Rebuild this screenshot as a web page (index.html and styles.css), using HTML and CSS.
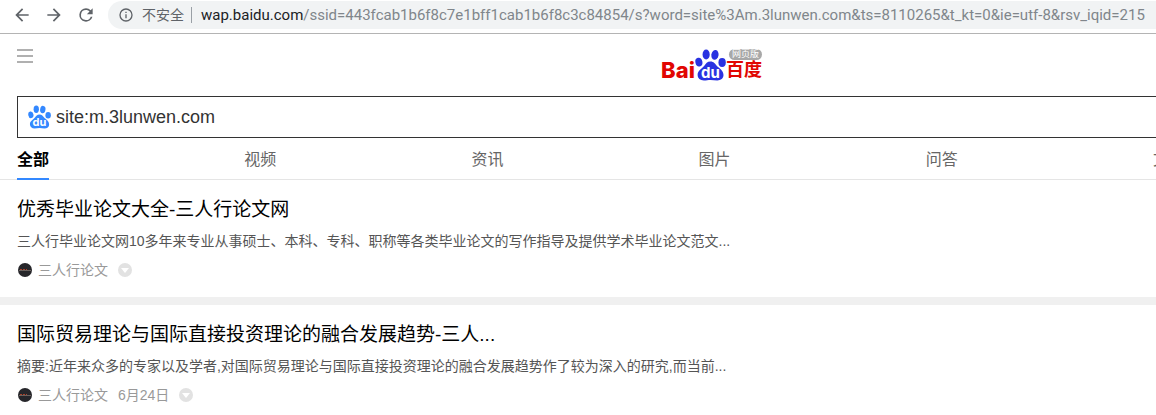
FILE: index.html
```html
<!DOCTYPE html>
<html lang="zh-CN">
<head>
    <meta charset="UTF-8">
    <meta name="viewport" content="width=device-width, initial-scale=1.0">
    <title>site:m.3lunwen.com - 百度</title>
    <link rel="stylesheet" href="styles.css">
</head>
<body>
    <!-- shared icons -->
    <svg class="sprite" aria-hidden="true">
        <symbol id="paw" viewBox="0 0 32 32">
            <ellipse cx="4" cy="13" rx="3.6" ry="4.6" transform="rotate(-12 4 13)"/>
            <ellipse cx="11.5" cy="5.2" rx="3.7" ry="5.1"/>
            <ellipse cx="20.6" cy="5.6" rx="3.7" ry="5.1" transform="rotate(10 20.6 5.6)"/>
            <ellipse cx="28" cy="13.5" rx="3.8" ry="4.6"/>
            <path d="M16 12.4c3.400 0 4.800 2.400 6.400 4.300 2.400 2.500 7 4.800 7 9.600 0 3.500-2.700 5.600-6.400 5.600-2.500 0-4.600-.5-7-.5s-4.300.5-6.800.5c-3.900 0-6.500-2.100-6.500-5.800 0-4.500 4.600-6.600 6.900-9.400 1.600-2.100 3-4.300 6.400-4.300z"/>
        </symbol>
    </svg>

    <header class="browser-bar">
        <button class="nav-btn" aria-label="后退">
            <svg viewBox="0 0 24 24"><path d="M20 11H7.830l5.590-5.590L12 4l-8 8 8 8 1.410-1.410L7.830 13H20v-2z"/></svg>
        </button>
        <button class="nav-btn" aria-label="前进">
            <svg viewBox="0 0 24 24"><path d="M12 4l-1.410 1.410L16.170 11H4v2h12.170l-5.580 5.590L12 20l8-8z"/></svg>
        </button>
        <button class="nav-btn" aria-label="刷新">
            <svg viewBox="0 0 24 24"><path d="M17.650 6.350A7.960 7.960 0 0 0 12 4a8 8 0 1 0 7.730 10h-2.080A6 6 0 1 1 12 6c1.660 0 3.140.69 4.220 1.780L13 11h7V4l-2.350 2.350z"/></svg>
        </button>
        <div class="address">
            <svg class="info" viewBox="0 0 24 24"><path d="M11 7h2v2h-2zm0 4h2v6h-2zm1-9a10 10 0 1 0 0 20 10 10 0 0 0 0-20zm0 18a8 8 0 1 1 0-16 8 8 0 0 1 0 16z"/></svg>
            <span class="security">不安全</span>
            <div class="url"><span class="host">wap.baidu.com</span>/ssid=443fcab1b6f8c7e1bff1cab1b6f8c3c84854/s?word=site%3Am.3lunwen.com&amp;ts=8110265&amp;t_kt=0&amp;ie=utf-8&amp;rsv_iqid=215</div>
        </div>
    </header>

    <div class="top">
        <button class="menu" aria-label="菜单"><span></span><span></span><span></span></button>
        <a class="logo" href="#" aria-label="百度">
            <span class="logo-bai">Bai</span>
            <span class="logo-paw"><svg><use href="#paw"/></svg><span class="du">du</span></span>
            <span class="logo-right"><span class="logo-badge">网页版</span><span class="logo-cn">百度</span></span>
        </a>
    </div>

    <form class="search">
        <span class="search-paw"><svg><use href="#paw"/></svg><span class="du">du</span></span>
        <input type="text" aria-label="搜索" value="site:m.3lunwen.com">
    </form>

    <nav class="tabs">
        <a class="active" href="#">全部</a>
        <a href="#">视频</a>
        <a href="#">资讯</a>
        <a href="#">图片</a>
        <a href="#">问答</a>
        <a href="#">文库</a>
    </nav>

    <main>
        <article class="result">
            <h3><a href="#">优秀毕业论文大全-三人行论文网</a></h3>
            <p>三人行毕业论文网10多年来专业从事硕士、本科、专科、职称等各类毕业论文的写作指导及提供学术毕业论文范文...</p>
            <div class="meta">
                <svg class="avatar" viewBox="0 0 14 14"><circle cx="7" cy="7" r="7" fill="#26262a"/><path d="M1 7.500h12" stroke="#6a625e"/><path d="M2 6.500h7" stroke="#a8432b" stroke-dasharray="2 1"/></svg>
                <span>三人行论文</span>
                <button class="more" aria-label="更多"><svg viewBox="0 0 14 14"><path d="M3 5h8L7 10z"/></svg></button>
            </div>
        </article>
        <article class="result">
            <h3><a href="#">国际贸易理论与国际直接投资理论的融合发展趋势-三人...</a></h3>
            <p>摘要:近年来众多的专家以及学者,对国际贸易理论与国际直接投资理论的融合发展趋势作了较为深入的研究,而当前...</p>
            <div class="meta">
                <svg class="avatar" viewBox="0 0 14 14"><circle cx="7" cy="7" r="7" fill="#26262a"/><path d="M1 7.500h12" stroke="#6a625e"/><path d="M2 6.500h7" stroke="#a8432b" stroke-dasharray="2 1"/></svg>
                <span>三人行论文</span>
                <span class="date">6月24日</span>
                <button class="more" aria-label="更多"><svg viewBox="0 0 14 14"><path d="M3 5h8L7 10z"/></svg></button>
            </div>
        </article>
    </main>
</body>
</html>
```
FILE: styles.css
```css
:root {
    --blue: #3388ff;
    --logo-red: #e10602;
    --logo-blue: #2932e1;
    --side: 17px;
}

* {
    margin: 0;
    padding: 0;
    box-sizing: border-box;
}

body {
    background: #fff;
    color: #000;
    font-family: "Liberation Sans", "Noto Sans CJK SC", sans-serif;
    overflow: hidden;
}

a {
    color: inherit;
    text-decoration: none;
}

button {
    border: none;
    background: none;
    cursor: pointer;
}

.sprite {
    display: none;
}

/* Browser toolbar */
.browser-bar {
    display: flex;
    align-items: center;
    height: 34px;
    padding: 0 0 4px 12px;
    border-bottom: 1px solid #b4b4b4;
}

.nav-btn {
    flex: none;
    width: 20px;
    height: 20px;
    margin-right: 12px;
}

.nav-btn svg {
    display: block;
    width: 20px;
    height: 20px;
    fill: #5f6368;
}

.address {
    display: flex;
    align-items: center;
    flex: 1;
    min-width: 0;
    height: 28px;
    padding-left: 10px;
    border-radius: 14px 0 0 14px;
    background: #f1f3f4;
    color: #80868b;
    overflow: hidden;
}

.info {
    flex: none;
    width: 16px;
    height: 16px;
    margin-right: 8px;
    fill: #5f6368;
}

.security {
    flex: none;
    padding-right: 7px;
    border-right: 1px solid #9aa0a6;
    color: #5f6368;
    font-size: 14px;
    line-height: 16px;
}

.url {
    margin-left: 9px;
    font-family: Roboto, sans-serif;
    font-size: 15px;
    white-space: nowrap;
}

.host {
    color: #202124;
}

/* Page header */
.top {
    display: grid;
    grid-template-columns: 1fr auto 1fr;
    padding: 15px 0 0 var(--side);
    height: 62px;
}

.menu {
    display: flex;
    flex-direction: column;
    gap: 4px;
    width: 16px;
    height: 16px;
}

.menu span {
    height: 2px;
    background: #b0b0b0;
}

.logo {
    display: flex;
    align-items: flex-end;
    height: 32px;
    margin-left: 250px;
    color: var(--logo-red);
    font-weight: bold;
}

.logo-bai {
    font-family: Inter, sans-serif;
    font-size: 22px;
    font-weight: 800;
    line-height: 22px;
}

.logo-paw,
.search-paw {
    position: relative;
    flex: none;
}

.logo-paw svg,
.search-paw svg {
    display: block;
    width: 100%;
    height: 100%;
    fill: currentColor;
}

.logo-paw {
    width: 31px;
    height: 32px;
    color: var(--logo-blue);
}

.du {
    position: absolute;
    right: 0;
    bottom: 1px;
    left: 0;
    color: #fff;
    font-family: Inter, sans-serif;
    font-size: 15px;
    font-weight: bold;
    line-height: 15px;
    text-align: center;
}

.logo-right {
    display: flex;
    flex-direction: column;
}

.logo-badge {
    align-self: flex-end;
    padding: 0 3px;
    border-radius: 6px;
    background: #a8a8a8;
    color: #fff;
    font-size: 9px;
    font-weight: normal;
    line-height: 11px;
}

.logo-cn {
    font-size: 18px;
    line-height: 21px;
}

/* Search box */
.search {
    display: flex;
    align-items: center;
    height: 42px;
    margin-left: var(--side);
    padding-left: 10px;
    border: 1px solid #333;
    border-right: none;
}

.search-paw {
    width: 23px;
    height: 24px;
    color: var(--blue);
}

.search-paw .du {
    font-size: 11px;
    line-height: 11px;
}

.search input {
    flex: 1;
    min-width: 0;
    height: 40px;
    margin-left: 5px;
    border: none;
    outline: none;
    color: #333;
    font-family: "Liberation Sans", sans-serif;
    font-size: 18px;
}

/* Result tabs */
.tabs {
    display: flex;
    height: 42px;
    padding: 0 3px 0 var(--side);
    border-bottom: 1px solid #e5e5e5;
    color: #666;
    font-size: 16px;
    line-height: 44px;
}

.tabs a {
    flex: none;
    width: 20%;
    height: 42px;
}

.tabs .active {
    width: auto;
    margin-right: calc(20% - 32px);
    border-bottom: 2px solid var(--blue);
    color: #000;
    font-weight: bold;
}

/* Results */
.result {
    height: 125px;
    padding: 16px var(--side) 0;
    border-bottom: 8px solid #f0f0f0;
}

.result h3 {
    font-size: 19px;
    font-weight: normal;
    line-height: 28px;
}

.result p {
    margin-top: 6px;
    color: #555;
    font-size: 14px;
    line-height: 22px;
}

.meta {
    display: flex;
    align-items: center;
    margin-top: 8px;
    color: #999;
    font-size: 14px;
    line-height: 20px;
}

.avatar {
    width: 14px;
    height: 14px;
    margin: 0 6px 0 1px;
}

.date {
    margin-left: 10px;
}

.more {
    width: 14px;
    height: 14px;
    margin-left: 10px;
    border-radius: 50%;
    background: #e2e2e2;
}

.more svg {
    display: block;
    fill: #fff;
}
```
